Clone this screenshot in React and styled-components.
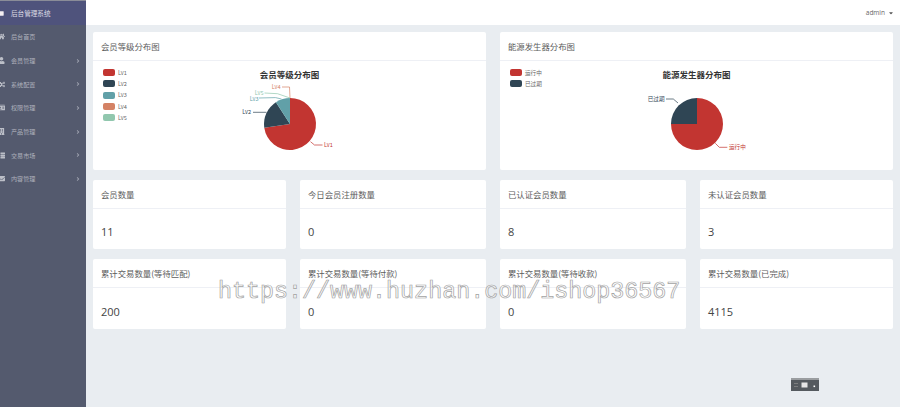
import React from "react";
import styled, { createGlobalStyle } from "styled-components";
import { FaHome, FaUser, FaCogs, FaIdCard, FaBuilding, FaThList, FaEnvelope, FaSquare, FaAngleRight, FaCaretDown } from "react-icons/fa";

const GlobalStyle = createGlobalStyle`
  html, body { margin: 0; padding: 0; height: 100%; overflow: hidden; }
  body { background: #e9edf1; font-family: "Noto Sans CJK SC", "Open Sans", sans-serif; }
`;

const COLORS = ["#c23531", "#2f4554", "#61a0a8", "#d48265", "#91c7ae"];

const menu = [
  { icon: FaHome, label: "后台首页" },
  { icon: FaUser, label: "会员管理", more: true },
  { icon: FaCogs, label: "系统配置", more: true },
  { icon: FaIdCard, label: "权限管理", more: true },
  { icon: FaBuilding, label: "产品管理", more: true },
  { icon: FaThList, label: "交易市场", more: true },
  { icon: FaEnvelope, label: "内容管理", more: true },
];

const stats = [
  { title: "会员数量", value: 11 },
  { title: "今日会员注册数量", value: 0 },
  { title: "已认证会员数量", value: 8 },
  { title: "未认证会员数量", value: 3 },
  { title: "累计交易数量(等待匹配)", value: 200 },
  { title: "累计交易数量(等待付款)", value: 0 },
  { title: "累计交易数量(等待收款)", value: 0 },
  { title: "累计交易数量(已完成)", value: 4115 },
];

const levelChart = {
  title: "会员等级分布图",
  legend: ["Lv1", "Lv2", "Lv3", "Lv4", "Lv5"],
  slices: [8, 2, 1],
  labels: [
    { text: "Lv1", color: 0, x: 114, y: 64.8, anchor: "start", line: "100.5,61.7 104.5,65 112.5,65" },
    { text: "Lv2", color: 1, x: 41, y: 32.3, anchor: "end", line: "56.5,32.3 43,32.3" },
    { text: "Lv3", color: 2, x: 48.5, y: 18.8, anchor: "end", line: "71.5,19 65.5,17.6 49,18" },
    { text: "Lv4", color: 3, x: 70.5, y: 7, anchor: "end", line: "80,18 79.5,7 72,7" },
    { text: "Lv5", color: 4, x: 53.5, y: 13, anchor: "end", line: "80,18 67.5,13.7 54.5,13" },
  ],
};

const generatorChart = {
  title: "能源发生器分布图",
  legend: ["运行中", "已过期"],
  slices: [3, 1],
  labels: [
    { text: "运行中", color: 0, x: 112, y: 67.2, anchor: "start", line: "98.3,63.3 102.3,67.3 110.3,67.3" },
    { text: "已过期", color: 1, x: 47.5, y: 19, anchor: "end", line: "61,23 56.3,19 49,19" },
  ],
};

const Page = styled.div`
  display: flex;
  width: 900px;
  height: 407px;
  position: relative;
  overflow: hidden;
`;

const Sidebar = styled.aside`
  width: 86px;
  flex: none;
  background: #545a6e;
`;

const Brand = styled.div`
  height: 24px;
  border-top: 1px solid #8a8c98;
  background: #4f537c;
  display: flex;
  align-items: center;
  gap: 7px;
  color: #dcdce6;
  font-size: 6.6px;
  svg { width: 5px; height: 5px; margin-left: -1px; color: #f4eef2; }
`;

const MenuRow = styled.div`
  height: 23.7px;
  display: flex;
  align-items: center;
  gap: 6px;
  color: #aeb1bc;
  font-size: 6.1px;
  svg.lead { width: 7px; height: 7px; margin-left: -2px; flex: none; color: #bcbfc8; }
  span { flex: 1; }
  svg.more { width: 6px; height: 6px; margin-right: 5px; color: #9ea2b0; }
`;

const Main = styled.div`
  flex: 1;
  display: flex;
  flex-direction: column;
`;

const Topbar = styled.header`
  height: 25px;
  flex: none;
  background: #fff;
  display: flex;
  justify-content: flex-end;
  align-items: center;
  gap: 3px;
  padding-right: 6px;
  color: #666;
  font-family: "Open Sans", sans-serif;
  font-size: 6.5px;
  box-sizing: border-box;
  svg { width: 6px; height: 6px; color: #555; }
`;

const Content = styled.main`
  display: grid;
  grid-template-columns: 193px 186px 186px 193px;
  grid-template-rows: 138px 69px 70px;
  column-gap: 14px;
  row-gap: 10px;
  padding: 7px;
`;

const Panel = styled.section`
  background: #fff;
  border-radius: 2px;
  grid-column: span ${(p) => p.$span || 1};
  display: flex;
  flex-direction: column;
`;

const PanelHead = styled.div`
  height: 29px;
  flex: none;
  box-sizing: border-box;
  border-bottom: 1px solid #eef0f5;
  padding: 0 8px;
  display: flex;
  align-items: center;
  color: #5c5c5c;
  font-size: 8.4px;
`;

const ChartBody = styled.div`
  flex: 1;
  display: grid;
  grid-template-columns: 1fr 160px 1fr;
`;

const Legend = styled.ul`
  list-style: none;
  margin: 0;
  padding: 6px 0 0 10px;
`;

const LegendItem = styled.li`
  height: 11.3px;
  display: flex;
  align-items: center;
  gap: 3px;
  font-size: 5.6px;
  color: #666;
`;

const Swatch = styled.i`
  width: 12px;
  height: 7px;
  border-radius: 2px;
  background: ${(p) => p.$color};
`;

const ChartArea = styled.div`
  display: flex;
  flex-direction: column;
  align-items: center;
`;

const ChartTitle = styled.div`
  height: 12px;
  margin-top: 7px;
  line-height: 12px;
  font-size: 8.5px;
  font-weight: 700;
  color: #333;
  white-space: nowrap;
`;

const StatValue = styled.div`
  flex: 1;
  display: flex;
  align-items: center;
  padding: 5px 8px 0;
  font-family: "Open Sans", sans-serif;
  font-size: 11px;
  color: #444;
`;

const Watermark = styled.div`
  position: absolute;
  left: 218px;
  top: 278px;
  font-family: "Liberation Mono", monospace;
  font-size: 23.35px;
  line-height: 28px;
  white-space: nowrap;
  color: rgba(255, 255, 255, 0.6);
  -webkit-text-stroke: 0.7px #a2a2a2;
  pointer-events: none;
`;

const DeviceIcon = styled.svg`
  position: absolute;
  left: 791px;
  top: 378px;
`;

const Pie = ({ slices, labels }) => {
  const cx = 80;
  const cy = 44;
  const r = 26;
  const total = slices.reduce((a, b) => a + b, 0);
  let angle = 0;
  return (
    <svg width="160" height="89" viewBox="0 0 160 89">
      {slices.map((value, i) => {
        const from = angle;
        angle += (value / total) * Math.PI * 2;
        const x1 = cx + r * Math.sin(from);
        const y1 = cy - r * Math.cos(from);
        const x2 = cx + r * Math.sin(angle);
        const y2 = cy - r * Math.cos(angle);
        const large = angle - from > Math.PI ? 1 : 0;
        return (
          <path
            key={i}
            d={`M${cx} ${cy}L${x1} ${y1}A${r} ${r} 0 ${large} 1 ${x2} ${y2}Z`}
            fill={COLORS[i]}
          />
        );
      })}
      {labels.map((l) => (
        <g key={l.text}>
          <polyline points={l.line} fill="none" stroke={COLORS[l.color]} strokeWidth="0.7" />
          <text
            x={l.x}
            y={l.y}
            dy="2"
            fontSize="5.6"
            textAnchor={l.anchor}
            fill={COLORS[l.color]}
            fontFamily='"Noto Sans CJK SC", "Open Sans", sans-serif'
          >
            {l.text}
          </text>
        </g>
      ))}
    </svg>
  );
};

const ChartPanel = ({ chart }) => (
  <Panel $span={2}>
    <PanelHead>{chart.title}</PanelHead>
    <ChartBody>
      <Legend>
        {chart.legend.map((name, i) => (
          <LegendItem key={name}>
            <Swatch $color={COLORS[i]} />
            {name}
          </LegendItem>
        ))}
      </Legend>
      <ChartArea>
        <ChartTitle>{chart.title}</ChartTitle>
        <Pie slices={chart.slices} labels={chart.labels} />
      </ChartArea>
    </ChartBody>
  </Panel>
);

const App = () => (
  <Page>
    <GlobalStyle />
    <Sidebar>
      <Brand>
        <FaSquare />
        后台管理系统
      </Brand>
      {menu.map(({ icon: Icon, label, more }) => (
        <MenuRow key={label}>
          <Icon className="lead" />
          <span>{label}</span>
          {more && <FaAngleRight className="more" />}
        </MenuRow>
      ))}
    </Sidebar>
    <Main>
      <Topbar>
        admin
        <FaCaretDown />
      </Topbar>
      <Content>
        <ChartPanel chart={levelChart} />
        <ChartPanel chart={generatorChart} />
        {stats.map((s) => (
          <Panel key={s.title}>
            <PanelHead>{s.title}</PanelHead>
            <StatValue>{s.value}</StatValue>
          </Panel>
        ))}
      </Content>
    </Main>
    <Watermark>https://www.huzhan.com/ishop36567</Watermark>
    <DeviceIcon width="28" height="13" viewBox="0 0 28 13">
      <rect x="0" y="0" width="28" height="13" fill="#555a5f" />
      <rect x="0" y="0" width="28" height="2" fill="#9a9da0" />
      <rect x="10.5" y="4.5" width="6" height="5" fill="#e6e6e6" />
      <rect x="22.5" y="7.5" width="1.6" height="1.6" fill="#fff" />
      <rect x="3" y="5" width="4" height="0.8" fill="#888" />
      <rect x="3" y="8" width="4" height="0.8" fill="#888" />
    </DeviceIcon>
  </Page>
);

export default App;
